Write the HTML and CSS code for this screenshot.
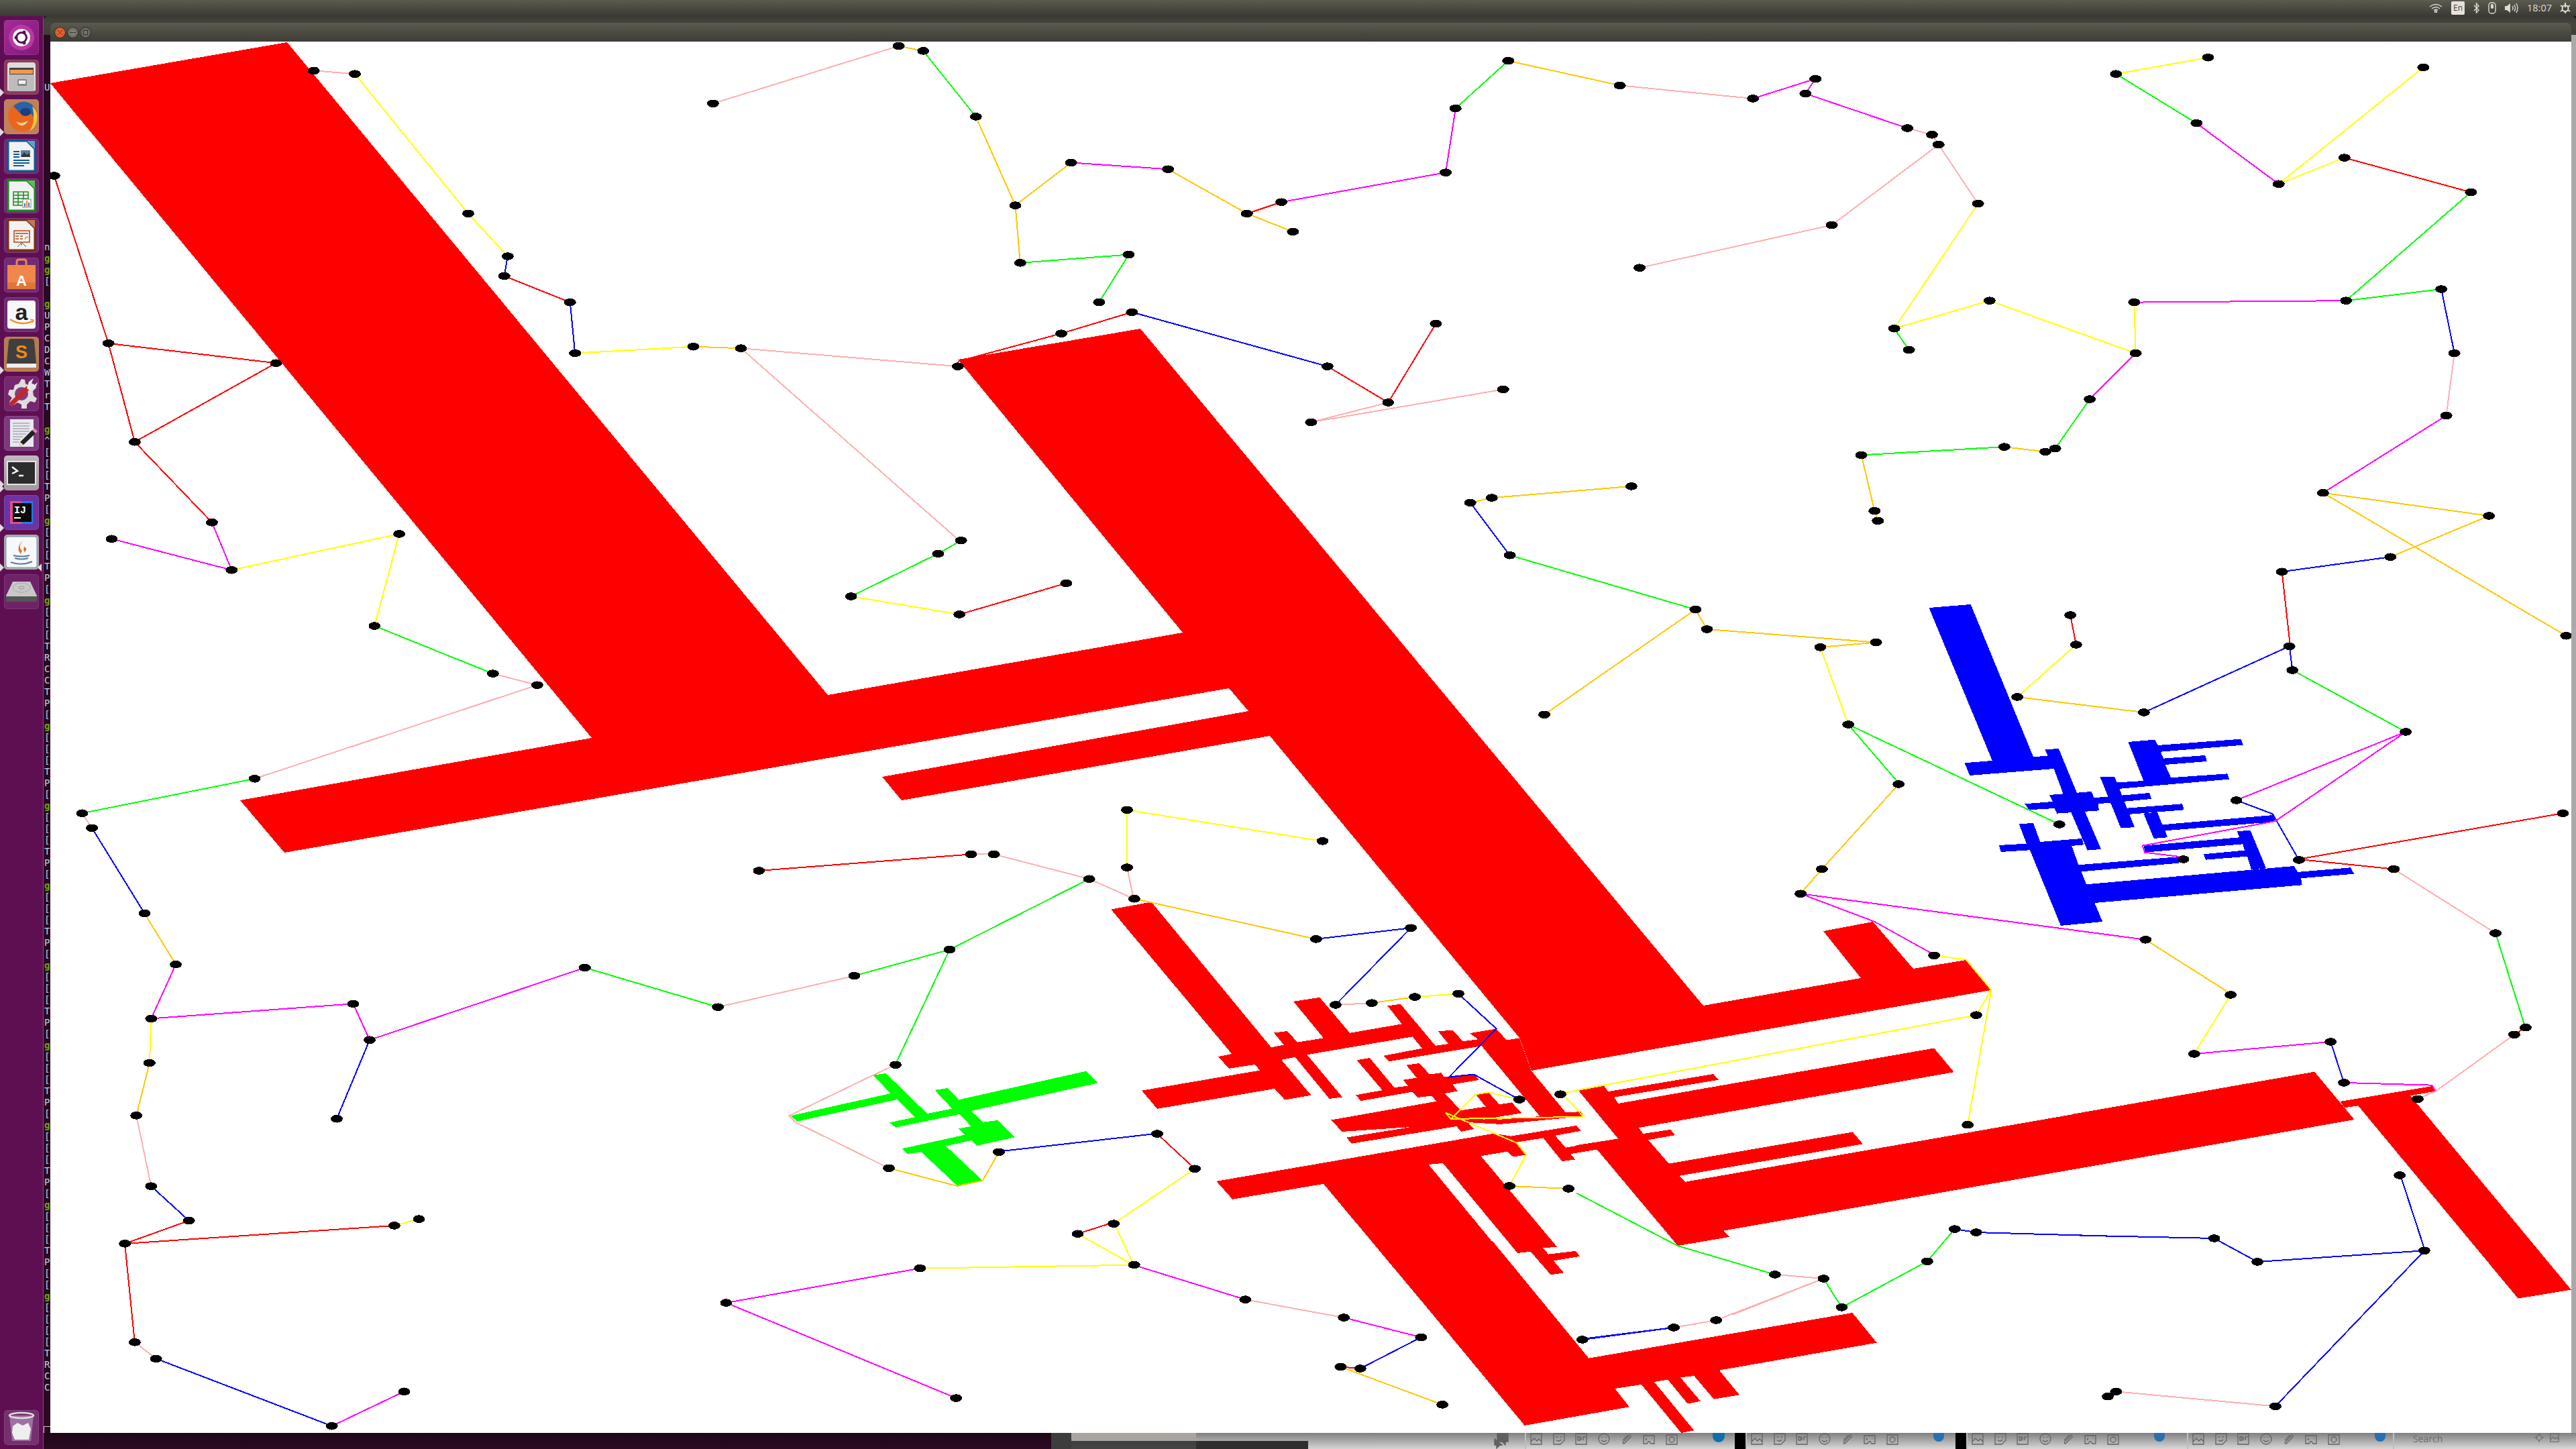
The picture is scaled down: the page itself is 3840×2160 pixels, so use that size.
FILE: index.html
```html
<!DOCTYPE html>
<html lang="en">
<head>
<meta charset="utf-8">
<title>Desktop</title>
<link rel="stylesheet" href="styles.css">
</head>
<body>
<header class="panel">
  <svg class="ind wifi" viewBox="0 0 20 14"><path d="M1 5Q10-2 19 5M4 8Q10 3 16 8M7 10.500Q10 8 13 10.500"/><circle cx="10" cy="12.500" r="1.500"/></svg>
  <span class="lang">En</span>
  <svg class="ind bt" viewBox="0 0 9 18"><path d="M1 5L8 12L4.500 16V2L8 6L1 13"/></svg>
  <svg class="ind mouse" viewBox="0 0 12 18"><rect x="1" y="1" width="10" height="16" rx="4"/><rect class="solid" x="4" y="3" width="4" height="7" rx="2"/></svg>
  <svg class="ind vol" viewBox="0 0 20 16"><path class="solid" d="M0 5H3L8 1V15L3 11H0Z"/><path d="M11 5Q13 8 11 11M14 3Q17 8 14 13M17 1Q21 8 17 15"/></svg>
  <time class="clock">18:07</time>
  <svg class="ind gear" viewBox="0 0 16 16"><circle cx="8" cy="8.500" r="4.500"/><path d="M8 0V7M8 13V16M1 4L4 6M12 11L15 13M15 4L12 6M4 11L1 13"/></svg>
</header>
<div class="main">
  <nav class="launcher">
    <div class="tile t-ubuntu"><svg viewBox="0 0 52 52"><circle cx="26" cy="26" r="19" fill="#b63aa4"/><circle cx="26" cy="26" r="13" fill="#fff"/><circle cx="26" cy="26" r="7.500" fill="none" stroke="#5a1050" stroke-width="3"/><circle cx="18" cy="26" r="2.500" fill="#5a1050"/><circle cx="30" cy="18" r="2.500" fill="#5a1050"/><circle cx="30" cy="34" r="2.500" fill="#5a1050"/></svg></div>
    <div class="tile t-files"><svg viewBox="0 0 52 52"><path d="M5 8Q5 4 9 4H43Q47 4 47 8V46H5Z" fill="#dcdcdc"/><path d="M8 12H44V22H8Z" fill="#4a4038"/><path d="M9 15H43V21H9Z" fill="#ee9a50"/><path d="M7 22H45V47H7Z" fill="#bcbcbc"/><rect x="20" y="29" width="14" height="10" rx="2" fill="#858585"/><rect x="22" y="31" width="10" height="5" fill="#f4f4f4"/></svg></div>
    <div class="tile t-fox"><svg viewBox="0 0 52 52"><circle cx="28" cy="26" r="22" fill="#e8671c"/><path d="M14 10Q28-2 42 8Q50 18 44 26Q38 18 30 20Q22 22 20 16Q16 14 14 10Z" fill="#2a62a8"/><ellipse cx="32" cy="19" rx="8" ry="6" fill="#1a3f80"/><path d="M42 10Q52 20 49 32Q46 44 38 47Q48 34 42 10Z" fill="#f5c842"/><path d="M18 33Q26 38 36 32Q30 42 22 38Z" fill="#f8d8a0"/></svg></div>
    <div class="tile t-doc"><svg viewBox="0 0 52 52"><path d="M6 3H34L46 15V48H6Z" fill="#f2f2f2" stroke="#0f5a90" stroke-width="3"/><path d="M34 3L46 15V3Z" fill="#5aa5d0"/><path d="M14 19H23M14 23H23M14 27H23" stroke="#0f5a90" stroke-width="2"/><path d="M14 32H38M14 36H38M14 40H30" stroke="#0f5a90" stroke-width="2"/><rect x="25" y="17" width="14" height="10" fill="#5a7fa0"/><path d="M25 27L30 20L34 24L37 21L39 27Z" fill="#333"/></svg></div>
    <div class="tile t-doc"><svg viewBox="0 0 52 52"><path d="M6 3H34L46 15V48H6Z" fill="#f2f2f2" stroke="#1a8a1a" stroke-width="3"/><path d="M34 3L46 15V3Z" fill="#5ac05a"/><path d="M14 20H36V40H14ZM14 25H36M14 30H36M14 35H36M21 20V40M29 20V40" fill="none" stroke="#1a8a1a" stroke-width="1.500"/><rect x="28" y="31" width="12" height="12" fill="#fff" stroke="#888"/><rect x="30" y="37" width="2" height="5" fill="#3a7abf"/><rect x="33" y="33" width="2" height="9" fill="#e8862a"/><rect x="36" y="36" width="2" height="6" fill="#3a7abf"/></svg></div>
    <div class="tile t-doc"><svg viewBox="0 0 52 52"><path d="M6 3H34L46 15V48H6Z" fill="#f2f2f2" stroke="#7a2d0a" stroke-width="3"/><path d="M34 3L46 15V3Z" fill="#c8784a"/><rect x="15" y="19" width="23" height="17" fill="#f8f0e8" stroke="#a8481a" stroke-width="1.500"/><path d="M17 23H36M17 27H22M17 31H22M24 27H28M24 31H28" stroke="#a8481a" stroke-width="1.500"/><path d="M31 32L33 28L36 29" stroke="#3a9a3a" fill="none"/><path d="M26 37L20 43M27 37L33 43M26 37V41" stroke="#555"/></svg></div>
    <div class="tile t-store"><svg viewBox="0 0 52 52"><path d="M19 13V6Q19 3 22 3H30Q33 3 33 6V13" fill="none" stroke="#e9855a" stroke-width="3"/><path d="M5 11H47V47H5Z" fill="#f0864a"/><path d="M5 37H47V47H5Z" fill="#e07636"/><text class="store-a" x="26" y="42" text-anchor="middle">A</text></svg></div>
    <div class="tile t-amazon"><svg viewBox="0 0 52 52"><rect x="5" y="5" width="42" height="42" rx="4" fill="#f8f8f8"/><text class="amazon-a" x="26" y="34" text-anchor="middle">a</text><path d="M9 33Q26 44 44 35" fill="none" stroke="#f09020" stroke-width="2.500"/><path d="M39 33L44 34L42 38" fill="none" stroke="#f09020" stroke-width="1.500"/></svg></div>
    <div class="tile t-sublime"><svg viewBox="0 0 52 52"><path d="M7 6Q8 3 11 3H41Q44 3 45 6L48 40H4Z" fill="#3f3f3f"/><path d="M4 40H48V46H4Z" fill="#eee"/><text class="sublime-s" x="26" y="32" text-anchor="middle">S</text></svg></div>
    <div class="tile t-tools"><svg viewBox="0 0 52 52"><path d="M26 4L31 5L32 11L38 14L44 11L48 17L43 22L44 29L49 33L46 39L39 37L34 42V48H26V42L20 39L14 43L8 38L12 32L6 27L8 20L14 20L16 13L22 11Z" fill="#ddd"/><circle cx="26" cy="26" r="10" fill="#8a3a80"/><path d="M9 43L36 17" stroke="#c0282a" stroke-width="7"/><path d="M34 18L37 8L44 3L41 10L45 13L50 9L47 17L38 21Z" fill="#e8e8e8"/></svg></div>
    <div class="tile t-gedit"><svg viewBox="0 0 52 52"><rect x="9" y="5" width="35" height="41" fill="#e8e8f0"/><path d="M13 11H38M13 15H38M13 19H38M13 23H38M13 27H33M13 31H28M13 35H24M13 39H22" stroke="#8a8a90"/><path d="M24 39L42 21L47 26L29 43L23 45Z" fill="#222"/><path d="M42 21L45 18L50 23L47 26Z" fill="#e088b0"/><path d="M24 39L29 43L23 45Z" fill="#f2e8a0"/></svg></div>
    <div class="tile t-term"><svg viewBox="0 0 52 52"><rect x="4" y="8" width="44" height="36" fill="#e4e4e4"/><rect x="6" y="10" width="40" height="32" fill="#2c2c2c"/><path d="M12 17L20 23L12 27" fill="none" stroke="#fff" stroke-width="2.500"/><path d="M22 30H29" stroke="#fff" stroke-width="2.500"/></svg></div>
    <div class="tile t-idea"><svg viewBox="0 0 52 52"><rect x="9" y="9" width="34" height="34" fill="#e84a8a"/><path d="M26 9H43V43H26Z" fill="#1a80e8"/><rect x="13" y="12" width="28" height="28" fill="#0a0a0a"/><text class="idea" x="15" y="27">IJ</text><path d="M15 34H25" stroke="#fff" stroke-width="2"/></svg></div>
    <div class="tile t-java"><svg viewBox="0 0 52 52"><rect x="3" y="3" width="46" height="46" rx="3" fill="#f6f8fa" stroke="#7a9ab0"/><path d="M28 9Q20 18 27 24Q24 28 26 30Q20 24 22 18Q24 12 28 9ZM30 18Q28 24 31 26Q36 20 30 18Z" fill="#e07020"/><path d="M14 31Q26 34 38 31M16 35Q26 38 36 35M10 41Q26 47 42 40" fill="none" stroke="#5a7f9a" stroke-width="2"/></svg></div>
    <div class="tile t-drive"><svg viewBox="0 0 52 52"><path d="M13 11H39L49 32V41H3V32Z" fill="#c8c8c8"/><path d="M3 33H49V41H3Z" fill="#555"/><ellipse cx="26" cy="20" rx="13" ry="7" fill="none" stroke="#aaa"/><ellipse cx="26" cy="20" rx="4" ry="2" fill="none" stroke="#999"/></svg></div>
    <div class="tile t-trash"><svg viewBox="0 0 52 52"><path d="M8 8H44L40 46H12Z" fill="#a070a0"/><ellipse cx="26" cy="8" rx="18" ry="4" fill="none" stroke="#ddd" stroke-width="2.500"/><path d="M13 24L20 19L28 23L36 19L40 28L37 44H16L12 34Z" fill="#eee"/></svg></div>
    <i class="pip" style="top:108px"></i>
    <i class="pip" style="top:167px"></i>
    <i class="pip" style="top:522px"></i>
    <i class="pip" style="top:692px"></i>
    <i class="pip" style="top:698px"></i>
    <i class="pip" style="top:757px"></i>
    <i class="pip" style="top:816px"></i>
    <i class="pip pip-r" style="top:816px"></i>
  </nav>
  <div class="desk">
    <div class="behind-title"></div>
    <pre class="term">U













n
<b>g</b>
<b>g</b>
[

<b>g</b>
U
P
C
D
C
W
T
r
T

<b>g</b>
^
[
[
[
T
P
[
<b>g</b>
[
[
[
T
P
[
<b>g</b>
[
[
[
T
R
C
C
T
P
[
<b>g</b>
[
[
[
T
P
[
<b>g</b>
[
[
[
T
P
[
<b>g</b>
[
[
[
T
P
[
<b>g</b>
[
[
[
T
P
[
<b>g</b>
[
[
[
T
P
[
<b>g</b>
[
[
[
T
P
[
<b>g</b>
[
[
[
T
P
[
[
<b>g</b>
[
[
[
[
T
R
C
C</pre>
    <span class="cursor"></span>
    <div class="edge"></div>
    <div class="strip">
      <div class="strip-a"></div>
      <div class="strip-b"></div>
      <div class="strip-c"><svg class="si chat" viewBox="0 0 24 24"><use href="#i-chat"/></svg></div>
      <div class="compose"><svg class="si"><use href="#i-a"/></svg><svg class="si"><use href="#i-b"/></svg><svg class="si"><use href="#i-c"/></svg><svg class="si"><use href="#i-d"/></svg><svg class="si"><use href="#i-e"/></svg><svg class="si"><use href="#i-f"/></svg><svg class="si"><use href="#i-g"/></svg><span class="moon first"></span><span class="blackbar"></span></div>
      <div class="compose"><svg class="si"><use href="#i-a"/></svg><svg class="si"><use href="#i-b"/></svg><svg class="si"><use href="#i-c"/></svg><svg class="si"><use href="#i-d"/></svg><svg class="si"><use href="#i-e"/></svg><svg class="si"><use href="#i-f"/></svg><svg class="si"><use href="#i-g"/></svg><span class="moon"></span><span class="blackbar"></span></div>
      <div class="compose"><svg class="si"><use href="#i-a"/></svg><svg class="si"><use href="#i-b"/></svg><svg class="si"><use href="#i-c"/></svg><svg class="si"><use href="#i-d"/></svg><svg class="si"><use href="#i-e"/></svg><svg class="si"><use href="#i-f"/></svg><svg class="si"><use href="#i-g"/></svg><span class="moon"></span></div>
      <div class="compose last"><svg class="si"><use href="#i-a"/></svg><svg class="si"><use href="#i-b"/></svg><svg class="si"><use href="#i-c"/></svg><svg class="si"><use href="#i-d"/></svg><svg class="si"><use href="#i-e"/></svg><svg class="si"><use href="#i-f"/></svg><svg class="si"><use href="#i-g"/></svg><span class="moon"></span></div>
      <div class="searchbox"><span class="search">Search</span><span class="spacer"></span><svg class="si small"><use href="#i-h"/></svg><svg class="si small"><use href="#i-a"/></svg></div>
    </div>
    <svg class="defs" width="0" height="0">
      <symbol id="i-a" viewBox="0 0 18 18"><path d="M1 1H17V17H1ZM1 13L6 8L10 12L13 9L17 13"/></symbol>
      <symbol id="i-b" viewBox="0 0 18 18"><path d="M1 1H17V11L11 17H1ZM5 6H7M11 6H13M5 11Q9 14 12 10"/></symbol>
      <symbol id="i-c" viewBox="0 0 18 18"><path d="M1 1H17V17H1ZM4 6H7V11H4ZM9 6V11M12 6H15M12 6V11"/></symbol>
      <symbol id="i-d" viewBox="0 0 18 18"><circle cx="9" cy="9" r="8"/><path d="M5 11Q9 15 13 11M6 6V7M12 6V7"/></symbol>
      <symbol id="i-e" viewBox="0 0 18 18"><path d="M15 2L4 13Q2 16 5 16L16 5M11 3L3 11"/></symbol>
      <symbol id="i-f" viewBox="0 0 18 18"><path d="M1 4H17V16H12L10 13H8L6 16H1ZM5 8V11M4 9H6M13 8V9"/></symbol>
      <symbol id="i-g" viewBox="0 0 18 18"><path d="M1 3H17V17H1Z"/><circle cx="9" cy="10" r="4"/></symbol>
      <symbol id="i-h" viewBox="0 0 18 18"><circle cx="9" cy="9" r="5"/><path d="M9 0V4M9 14V18M0 9H4M14 9H18"/></symbol>
      <symbol id="i-chat" viewBox="0 0 24 24"><path d="M6 1H22V13H18V18L13 13H6Z"/><path d="M2 8V18H5V23L10 18H14"/></symbol>
    </svg>
    <section class="window">
      <div class="titlebar">
        <span class="wbtn close"></span>
        <span class="wbtn minim"></span>
        <span class="wbtn maxim"></span>
      </div>
      <svg class="canvas" viewBox="75 62 3758 2074" width="3758" height="2074">
        <defs>
          <ellipse id="nt" rx="3.670" ry="2.370"/>
          <ellipse id="n4" rx="17.600" ry="17.400"/>
          <ellipse id="n5" rx="17.600" ry="14.700"/>
          <ellipse id="n6" rx="27" ry="17.400"/>
          <ellipse id="n7" rx="17.600" ry="16.200"/>
          <ellipse id="n10" rx="23.500" ry="17.400"/>
          <ellipse id="n12" rx="19" ry="17.400"/>
        </defs>

        <!-- solid bodies -->
        <polygon class="fr" points="75,124 428,63 1234,1036 1763,943 1428,536 1700,490 2539,1499 2774,1458 2718,1388 2792,1374 2852,1444 2931,1431 2968,1476 2350,1584 2283,1596 2265,1547 1893,1097 1344,1193 1315,1158 1861,1060 1832,1026 424,1271 358,1193 882,1100"/>
        <g transform="translate(1650 1320) scale(.5102 .3954)">
          <polygon class="fr" points="12,90 130,62 480,610 517,601 488,555 527,549 557,591 633,575 545,437 622,422 710,556 862,522 820,454 858,447 960,604 998,597 968,550 1010,545 1040,587 1085,580 1060,557 1138,540 1168,583 1205,575 1240,698 1095,605 825,663 808,642 921,614 893,570 585,638 688,798 650,804 550,647 510,657 597,791 520,808 490,766 147,842 102,773 447,697 433,675 357,690 325,645 365,635"/>
          <polygon class="fr" points="1095,605 1240,698 1340,855 1385,853 1393,870 1150,900 1120,885 1265,870"/>
          <polygon class="fr" points="730,658 768,650 840,762 880,755 865,733 905,725 875,677 913,670 943,712 977,706 985,722 1075,712 1087,733 1010,750 1025,775 950,793 908,799 893,778 742,812 727,790 805,772"/>
          <polygon class="fr" points="655,884 962,814 950,793 985,782 1035,848 1183,818 1213,858 1010,900 687,928"/>
          <polygon class="fr" points="700,950 1010,885 1140,880 1150,900 1055,893 1073,918 1035,928 1022,908 715,973"/>
          <polygon class="fr" points="1078,788 1115,780 1147,826 1107,834"/>
          <polygon class="fr" points="320,1115 1130,935 1180,945 1372,905 1385,925 1310,943 1340,988 1495,955 1433,995 1355,1012 1368,1033 1330,1040 1275,952 1197,968 1225,1015 1187,1023 1170,1003 1093,1020 1315,1362 1275,1367 1290,1390 1370,1378 1382,1398 1305,1415 1335,1460 1297,1468 1238,1380 1200,1386 982,1047 940,1052 1270,1568 920,1568 633,1125 367,1183"/>
        </g>
        <g transform="translate(2350 1400) scale(.5102 .3571)">
          <polygon class="fr" points="6,632 80,612 93,636 400,563 416,587 110,660 122,686 1045,455 1103,555 182,787 195,812 275,795 288,818 210,838 270,937 807,805 837,855 300,988 318,1013 1568,702 1568,932 430,1217 447,1243 296,1280 60,878 0,890 0,860 122,833"/>
        </g>
        <g transform="translate(2200 1850) scale(.3827 .3333)">
          <polygon class="fr" points="-405,0 65,0 440,524 1467,321 1562,455 948,578 1027,688 927,707 850,603 797,610 875,716 825,728 748,620 695,630 850,847 800,858 645,642 542,660 598,742 190,825"/>
        </g>
        <g transform="translate(3100 1450) scale(.4719 .3333)">
          <polygon class="fr" points="-20,632 742,443 868,657 -20,880"/>
          <polygon class="fr" points="823,576 1115,507 1125,530 1045,550 1553,1418 1385,1457 880,595 837,604"/>
        </g>
        <g transform="translate(2800 880) scale(.5102 .3333)">
          <polygon class="fb" points="148,78 270,63 453,745 495,740 487,712 527,708 580,905 540,910 513,798 267,828 252,772 333,762"/>
          <polygon class="fb" points="540,910 580,905 651,1158 611,1163"/>
          <polygon class="fb" points="500,915 623,900 630,928 792,906 798,933 642,955 645,985 522,998 515,975 440,982 428,955 510,945"/>
          <polygon class="fb" points="648,835 690,833 749,1060 708,1062"/>
          <polygon class="fb" points="730,678 808,668 817,693 1060,665 1066,692 825,722 833,752 955,738 960,765 838,780 855,838 1020,820 1025,845 700,888 693,860 775,852"/>
          <polygon class="fb" points="720,975 888,955 893,982 730,1002"/>
          <polygon class="fb" points="775,998 815,992 830,1048 1155,1005 1160,1035 838,1075 845,1105 805,1110"/>
          <polygon class="fb" points="353,1140 433,1133 411,1045 453,1041 473,1125 595,1110 600,1138 565,1143 585,1228 875,1192 878,1220 593,1258 608,1315 1090,1250 1215,1233 1225,1260 1380,1240 1390,1268 1235,1288 1238,1318 632,1398 655,1482 533,1500 443,1162 358,1170"/>
          <polygon class="fb" points="775,1142 1055,1105 1048,1078 1087,1073 1133,1243 1090,1250 1078,1190 957,1205 950,1180 1070,1163 1065,1135 780,1172"/>
        </g>
        <g transform="translate(1150 1560) scale(.3333)">
          <polygon class="fg" points="455,128 512,120 697,300 808,278 730,195 787,186 838,238 1408,110 1462,163 893,288 947,338 1012,330 1088,406 920,443 895,420 780,445 945,600 830,622 670,472 608,480 583,457 865,395 837,367 893,357 843,303 555,362 528,340 642,316 563,237 115,335 85,310 532,210"/>
        </g>

        <!-- links -->
        <g transform="scale(2.449)">
          <path class="e r" d="M33 107L66 209L82 269L168 221L66 209M82 269L129 318M583 220L646 203L689 190M307 168L347 184M462 530L591 520M115 743L76 757L240 746M76 757L82 817M808 223L845 245L874 197M1389 348L1394 393M1427 96L1504 117M1245 275L1251 273M656 751L678 744M816 832L828 833M584 374L649 355M759 130L780 123M1399 523L1560 495M1399 523L1457 529"/>
          <path class="e b" d="M309 156L307 168M347 184L350 215M689 190L808 223M919 338L895 306M1389 348L1455 339M1486 176L1494 215M56 504L88 556M225 633L205 681M92 722L115 743M95 827L202 868M607 701L704 690M865 814L828 833M1476 761L1385 856M1461 715L1476 761M963 815L1019 808"/>
          <path class="e g" d="M562 31L594 71M621 160L687 155L669 184M886 66L918 37M1288 45L1337 75M1428 183L1504 117M1428 183L1486 176M1220 272L1133 277M1251 273L1272 243M919 338L1032 371M1125 441L1156 477M1125 441L1254 502M228 381L300 410M50 495L155 474M356 589L437 613M520 594L578 578L663 535M578 578L545 648M518 363L571 337L585 329M1153 200L1162 213M1519 568L1537 625"/>
          <path class="e y" d="M216 45L285 130L309 156M350 215L422 211M141 347L243 325L228 381M518 363L584 374M1153 200L1204 124M1153 200L1211 183L1300 215L1299 184M1387 112L1475 41M1288 45L1344 35M1387 112L1427 96M1108 394L1125 441M686 493L805 512M686 493L686 528M92 620L91 647M240 746L255 742M560 772L690 770M656 751L690 770M678 744L690 770"/>
          <path class="e o" d="M547 28L562 31M594 71L618 125L621 160M618 125L652 99M711 103L759 130L787 141M918 37L986 52M422 211L451 212M1414 300L1515 314L1455 339M1414 300L1562 387M1133 277L1141 311L1143 317M1032 371L940 435M1032 371L1039 383L1142 391L1108 394M1156 477L1109 529L1096 544M88 556L107 587M91 647L83 679M895 306L908 303L993 296M1245 275L1220 272M816 832L878 855M1306 572L1358 605"/>
          <path class="e p" d="M191 43L216 45M434 63L547 28M451 212L583 223M451 212L585 330M986 52L1067 60M1180 88L1115 137L998 163M1180 88L1204 124M845 245L798 257L915 237M300 410L327 417L155 474M50 495L56 504M437 613L520 594M663 535L605 520L591 520M663 535L690 547L686 528M83 679L92 722M82 817L95 827M1489 253L1494 215M1288 847L1385 856M758 791L818 802M1457 529L1519 568M1161 78L1176 82L1180 88"/>
          <path class="e m" d="M652 99L711 103M780 123L880 105L886 66M1067 60L1105 48L1099 57L1161 78M1299 184L1428 183M1337 75L1387 112M1489 253L1414 300M1272 243L1300 215M129 318L141 347L68 328M107 587L92 620L215 611L225 633L356 589M442 793L560 772M442 793L582 851M690 770L758 791M818 802L865 814M202 868L246 847M1096 544L1306 572M1096 544L1141 561L1177 581"/>
        </g>
        <g transform="translate(1650 1320) scale(.5102 .3954)">
          <path class="e o" d="M80 50L611 202M774 443L900 420M1176 1133L1349 1143"/>
          <path class="e b" d="M611 202L888 160L668 450M1027 408L1138 540L1000 722L1072 712L1205 807"/>
          <path class="e p" d="M668 450L774 443"/>
          <path class="e y" d="M900 420L1027 408M1205 807L1115 780L1078 787L1005 880L990 857L1197 970L1225 1015L1176 1133M1005 880L1393 872L1335 790M1325 787L1380 770L1568 725M257 1068L20 1275"/>
          <path class="e r" d="M147 936L257 1068"/>
        </g>
        <g transform="translate(2350 1400) scale(.5102 .3571)">
          <path class="e y" d="M1045 68L1138 85L1212 212L1168 317L5 630M1212 212L1143 775"/>
          <path class="e g" d="M0 1060L296 1280L580 1400M722 1417L775 1537L1025 1345L1105 1210"/>
          <path class="e p" d="M580 1400L722 1417L455 1568"/>
          <path class="e b" d="M1105 1210L1168 1224L1568 1240"/>
        </g>
        <g transform="translate(3100 1450) scale(.4719 .3333)">
          <path class="e y" d="M477 99L362 363"/>
          <path class="e m" d="M362 363L793 309M835 492L1113 503L1125 530"/>
          <path class="e b" d="M793 309L835 492M0 1175L425 1188L562 1293L1089 1243"/>
          <path class="e p" d="M1068 565L1125 530L1373 277"/>
          <path class="e r" d="M1373 277L1409 245"/>
        </g>
        <g transform="translate(2800 880) scale(.5102 .3333)">
          <path class="e r" d="M561 111L578 243"/>
          <path class="e y" d="M578 243L406 477"/>
          <path class="e o" d="M406 477L776 546"/>
          <path class="e b" d="M776 546L1201 250L1210 357M1046 939L1152 1000L1229 1206"/>
          <path class="e g" d="M1210 357L1541 633"/>
          <path class="e m" d="M1541 633L1046 939M1541 633L1160 1032L772 1142L778 1172L875 1190L891 1203"/>
        </g>
        <g transform="translate(1150 1560) scale(.3333)">
          <path class="e p" d="M555 82L455 128L78 310L110 340L525 544"/>
          <path class="e o" d="M525 544L830 624L945 600L1017 472"/>
        </g>
        <g transform="translate(2200 1850) scale(.3827 .3333)">
          <path class="e b" d="M415 441L771 387"/>
          <path class="e p" d="M771 387L936 354L1354 168"/>
        </g>

        <!-- nodes -->
        <g transform="scale(2.449)">
          <use href="#nt" x="191" y="43"/><use href="#nt" x="216" y="45"/><use href="#nt" x="285" y="130"/><use href="#nt" x="309" y="156"/><use href="#nt" x="307" y="168"/><use href="#nt" x="347" y="184"/><use href="#nt" x="350" y="215"/><use href="#nt" x="422" y="211"/><use href="#nt" x="451" y="212"/><use href="#nt" x="583" y="223"/><use href="#nt" x="585" y="329"/><use href="#nt" x="571" y="337"/><use href="#nt" x="518" y="363"/><use href="#nt" x="584" y="374"/><use href="#nt" x="649" y="355"/><use href="#nt" x="434" y="63"/><use href="#nt" x="547" y="28"/><use href="#nt" x="562" y="31"/><use href="#nt" x="594" y="71"/><use href="#nt" x="618" y="125"/><use href="#nt" x="621" y="160"/><use href="#nt" x="652" y="99"/><use href="#nt" x="711" y="103"/><use href="#nt" x="759" y="130"/><use href="#nt" x="787" y="141"/><use href="#nt" x="780" y="123"/><use href="#nt" x="880" y="105"/><use href="#nt" x="886" y="66"/><use href="#nt" x="918" y="37"/><use href="#nt" x="986" y="52"/><use href="#nt" x="1067" y="60"/><use href="#nt" x="1105" y="48"/><use href="#nt" x="1099" y="57"/><use href="#nt" x="1161" y="78"/><use href="#nt" x="1176" y="82"/><use href="#nt" x="1180" y="88"/><use href="#nt" x="1115" y="137"/><use href="#nt" x="998" y="163"/><use href="#nt" x="1204" y="124"/><use href="#nt" x="1153" y="200"/><use href="#nt" x="1162" y="213"/><use href="#nt" x="1211" y="183"/><use href="#nt" x="1300" y="215"/><use href="#nt" x="1299" y="184"/><use href="#nt" x="1428" y="183"/><use href="#nt" x="1504" y="117"/><use href="#nt" x="1427" y="96"/><use href="#nt" x="1387" y="112"/><use href="#nt" x="1337" y="75"/><use href="#nt" x="1288" y="45"/><use href="#nt" x="1344" y="35"/><use href="#nt" x="1475" y="41"/><use href="#nt" x="1486" y="176"/><use href="#nt" x="1494" y="215"/><use href="#nt" x="1489" y="253"/><use href="#nt" x="1414" y="300"/><use href="#nt" x="1515" y="314"/><use href="#nt" x="1455" y="339"/><use href="#nt" x="1389" y="348"/><use href="#nt" x="1562" y="387"/><use href="#nt" x="1272" y="243"/><use href="#nt" x="1251" y="273"/><use href="#nt" x="1245" y="275"/><use href="#nt" x="1220" y="272"/><use href="#nt" x="1133" y="277"/><use href="#nt" x="1141" y="311"/><use href="#nt" x="1143" y="317"/><use href="#nt" x="1039" y="383"/><use href="#nt" x="1032" y="371"/><use href="#nt" x="940" y="435"/><use href="#nt" x="919" y="338"/><use href="#nt" x="895" y="306"/><use href="#nt" x="908" y="303"/><use href="#nt" x="993" y="296"/><use href="#nt" x="1142" y="391"/><use href="#nt" x="1108" y="394"/><use href="#nt" x="1125" y="441"/><use href="#nt" x="1096" y="544"/><use href="#nt" x="1109" y="529"/><use href="#nt" x="1306" y="572"/><use href="#nt" x="687" y="155"/><use href="#nt" x="669" y="184"/><use href="#nt" x="689" y="190"/><use href="#nt" x="646" y="203"/><use href="#nt" x="808" y="223"/><use href="#nt" x="845" y="245"/><use href="#nt" x="874" y="197"/><use href="#nt" x="798" y="257"/><use href="#nt" x="915" y="237"/><use href="#nt" x="33" y="107"/><use href="#nt" x="66" y="209"/><use href="#nt" x="82" y="269"/><use href="#nt" x="168" y="221"/><use href="#nt" x="129" y="318"/><use href="#nt" x="141" y="347"/><use href="#nt" x="68" y="328"/><use href="#nt" x="243" y="325"/><use href="#nt" x="228" y="381"/><use href="#nt" x="300" y="410"/><use href="#nt" x="327" y="417"/><use href="#nt" x="155" y="474"/><use href="#nt" x="50" y="495"/><use href="#nt" x="56" y="504"/><use href="#nt" x="88" y="556"/><use href="#nt" x="107" y="587"/><use href="#nt" x="92" y="620"/><use href="#nt" x="215" y="611"/><use href="#nt" x="225" y="633"/><use href="#nt" x="205" y="681"/><use href="#nt" x="356" y="589"/><use href="#nt" x="437" y="613"/><use href="#nt" x="520" y="594"/><use href="#nt" x="578" y="578"/><use href="#nt" x="663" y="535"/><use href="#nt" x="605" y="520"/><use href="#nt" x="591" y="520"/><use href="#nt" x="462" y="530"/><use href="#nt" x="686" y="493"/><use href="#nt" x="686" y="528"/><use href="#nt" x="805" y="512"/><use href="#nt" x="91" y="647"/><use href="#nt" x="83" y="679"/><use href="#nt" x="92" y="722"/><use href="#nt" x="115" y="743"/><use href="#nt" x="76" y="757"/><use href="#nt" x="240" y="746"/><use href="#nt" x="255" y="742"/><use href="#nt" x="82" y="817"/><use href="#nt" x="95" y="827"/><use href="#nt" x="202" y="868"/><use href="#nt" x="246" y="847"/><use href="#nt" x="656" y="751"/><use href="#nt" x="560" y="772"/><use href="#nt" x="442" y="793"/><use href="#nt" x="582" y="851"/><use href="#nt" x="758" y="791"/><use href="#nt" x="818" y="802"/><use href="#nt" x="865" y="814"/><use href="#nt" x="828" y="833"/><use href="#nt" x="816" y="832"/><use href="#nt" x="878" y="855"/><use href="#nt" x="1283" y="850"/><use href="#nt" x="1288" y="847"/><use href="#nt" x="1385" y="856"/><use href="#nt" x="1457" y="529"/><use href="#nt" x="1519" y="568"/><use href="#nt" x="1560" y="495"/>
        </g>
        <g transform="translate(1650 1320) scale(.5102 .3954)">
          <use href="#n5" x="80" y="50"/><use href="#n5" x="611" y="202"/><use href="#n5" x="888" y="160"/><use href="#n5" x="668" y="450"/><use href="#n5" x="774" y="443"/><use href="#n5" x="900" y="420"/><use href="#n5" x="1027" y="408"/><use href="#n5" x="1205" y="807"/><use href="#n5" x="1325" y="787"/><use href="#n5" x="1176" y="1133"/><use href="#n5" x="1349" y="1143"/><use href="#n5" x="147" y="936"/><use href="#n5" x="257" y="1068"/><use href="#n5" x="20" y="1275"/><use href="#n5" x="80" y="1430"/>
        </g>
        <g transform="translate(2350 1400) scale(.5102 .3571)">
          <use href="#n7" x="1045" y="68"/><use href="#n7" x="1168" y="317"/><use href="#n7" x="1143" y="775"/><use href="#n7" x="580" y="1400"/><use href="#n7" x="722" y="1417"/><use href="#n7" x="775" y="1537"/><use href="#n7" x="1025" y="1345"/><use href="#n7" x="1105" y="1210"/><use href="#n7" x="1168" y="1224"/>
        </g>
        <g transform="translate(2200 1850) scale(.3827 .3333)">
          <use href="#n10" x="415" y="441"/><use href="#n10" x="771" y="387"/><use href="#n10" x="936" y="354"/>
        </g>
        <g transform="translate(3100 1450) scale(.4719 .3333)">
          <use href="#n12" x="477" y="99"/><use href="#n12" x="362" y="363"/><use href="#n12" x="793" y="309"/><use href="#n12" x="835" y="492"/><use href="#n12" x="1068" y="565"/><use href="#n12" x="1373" y="277"/><use href="#n12" x="1409" y="245"/><use href="#n12" x="1011" y="906"/><use href="#n12" x="1089" y="1243"/><use href="#n12" x="425" y="1188"/><use href="#n12" x="562" y="1293"/>
        </g>
        <g transform="translate(2800 880) scale(.5102 .3333)">
          <use href="#n4" x="561" y="111"/><use href="#n4" x="578" y="243"/><use href="#n4" x="406" y="477"/><use href="#n4" x="776" y="546"/><use href="#n4" x="1201" y="250"/><use href="#n4" x="1210" y="357"/><use href="#n4" x="1541" y="633"/><use href="#n4" x="1046" y="939"/><use href="#n4" x="891" y="1203"/><use href="#n4" x="1229" y="1206"/><use href="#n4" x="529" y="1047"/><use href="#n4" x="59" y="867"/>
        </g>
        <g transform="translate(1150 1560) scale(.3333)">
          <use href="#n6" x="555" y="82"/><use href="#n6" x="525" y="544"/><use href="#n6" x="1017" y="472"/>
        </g>
      </svg>
    </section>
  </div>
</div>
</body>
</html>
```

FILE: styles.css
```css
* { box-sizing: border-box; }
html, body { margin: 0; padding: 0; width: 3840px; height: 2160px; overflow: hidden; background: #2c0a24; }
body { display: flex; flex-direction: column; font-family: "Open Sans", sans-serif; }

.panel {
  height: 24px; flex: none; display: flex; align-items: center; justify-content: flex-end;
  gap: 13px; padding-right: 8px;
  background: linear-gradient(#5c5b50, #3a3933);
}
.ind { fill: none; stroke: #dfdbd2; stroke-width: 1.4; }
.ind .solid, .ind circle.solid { fill: #dfdbd2; stroke: none; }
.wifi { width: 20px; height: 14px; }
.lang { width: 20px; height: 20px; background: #e6e2da; color: #3c3b37; font-size: 12px; line-height: 20px; text-align: center; border-radius: 2px; }
.bt { width: 9px; height: 18px; }
.mouse { width: 12px; height: 18px; }
.vol { width: 20px; height: 16px; }
.clock { width: 36px; color: #dcdcd6; font-size: 14.500px; line-height: 24px; white-space: nowrap; }
.gear { width: 16px; height: 16px; stroke-width: 2; }

.main { display: flex; flex: 1; height: 2136px; }

.launcher {
  position: relative; flex: none; width: 65px; height: 2136px; padding: 6px 7px 6px 6px;
  display: flex; flex-direction: column; gap: 7px;
  background: #5e0f52; border-right: 1px solid #7d4f76;
}
.tile { width: 52px; height: 52px; flex: none; border-radius: 5px; background: rgba(255, 255, 255, .13); box-shadow: inset 0 0 0 1px rgba(255, 255, 255, .1); }
.tile svg { display: block; width: 52px; height: 52px; }
.t-ubuntu { background: linear-gradient(135deg, #a62a96, #84187a); }
.t-files { background: #8b3a5c; }
.t-fox { background: #c08058; }
.t-doc { background: #6e2a70; }
.t-store { background: #722a72; }
.t-amazon { background: #702a72; }
.t-sublime { background: #b67c4c; }
.t-tools { background: #76286e; }
.t-gedit { background: #7e3a7e; }
.t-term { background: linear-gradient(#c0b8bc, #a09a9e); }
.t-idea { background: #6c34a2; }
.t-java { background: #a8a8a8; }
.t-drive { background: #6e2268; }
.t-trash { margin-top: auto; background: #75306e; }
.store-a { font: bold 22px "Liberation Sans", sans-serif; fill: #fff; }
.amazon-a { font: bold 34px "Liberation Sans", sans-serif; fill: #222; }
.sublime-s { font: bold 27px "Liberation Sans", sans-serif; fill: #f08a1c; }
.idea { font: bold 15px "Liberation Mono", monospace; fill: #fff; }
.pip { position: absolute; left: 0; width: 0; height: 0; border: 6px solid transparent; border-left: 6px solid #ddd; border-right: 0; }
.pip-r { left: auto; right: 2px; border-left: 0; border-right: 6px solid #ddd; }

.desk { position: relative; flex: 1; background: #2a0a22; }
.behind-title { height: 28px; background: linear-gradient(#3a3933, #46453d 40%, #3e3d37); border-radius: 6px 6px 0 0; }
.term {
  position: absolute; left: 0; top: 98px; width: 10px; margin: 0; padding-left: 1px; overflow: hidden;
  font: 14px/17px "DejaVu Sans Mono", monospace; color: #c4cfe0;
}
.term b { color: #6ea514; }
.cursor { position: absolute; left: 0; top: 2102px; width: 11px; height: 18px; border: 1px solid #c8c8c8; }
.edge { position: absolute; top: 28px; right: 0; bottom: 24px; width: 7px; background: #a9a9a9; }

.window { position: absolute; left: 10px; top: 10px; width: 3758px; height: 2102px; }
.titlebar {
  height: 28px; display: flex; align-items: center; gap: 4px; padding-left: 7px;
  background: linear-gradient(#5b5a4f, #3d3c36); border-radius: 8px 8px 0 0;
}
.wbtn { width: 15px; height: 15px; border-radius: 50%; background: radial-gradient(#7c7b73, #55544d); box-shadow: 0 0 0 1px #33322e; position: relative; }
.close { background: radial-gradient(#f0703a, #d64a20); }
.minim { background: radial-gradient(#8a8981, #5d5c55); }
.close::after { content: ""; position: absolute; inset: 4px; background: linear-gradient(45deg, transparent 45%, #5a2010 45%, #5a2010 55%, transparent 55%), linear-gradient(-45deg, transparent 45%, #5a2010 45%, #5a2010 55%, transparent 55%); }
.minim::after { content: ""; position: absolute; left: 3px; right: 3px; top: 7px; height: 1px; background: #33322e; }
.maxim::after { content: ""; position: absolute; inset: 4px; border: 1px solid #33322e; }

.canvas { display: block; background: #fff; shape-rendering: crispEdges; }
.canvas use { fill: #000; }
.fr { fill: #f00; }
.fb { fill: #00f; }
.fg { fill: #0f0; }
.e { fill: none; stroke-width: 2; vector-effect: non-scaling-stroke; stroke-linejoin: miter; }
.r { stroke: #f00; }
.b { stroke: #00f; }
.g { stroke: #0f0; }
.y { stroke: #ff0; }
.o { stroke: #ffc800; }
.p { stroke: #ffafaf; }
.m { stroke: #f0f; }

.strip { position: absolute; left: 0; right: 0; bottom: 0; height: 24px; display: flex; background: linear-gradient(#1e0718, #2c0a22); overflow: hidden; }
.strip-a { width: 1502px; flex: none; }
.strip-b { width: 216px; flex: none; background: linear-gradient(#3a3a3a, #444); border-left: 30px solid #3d3d3d; box-shadow: inset 0 12px 0 #a8a49e; }
.strip-c {
  width: 490px; flex: none; padding-left: 443px;
  background: linear-gradient(#2e2e2e, #2e2e2e) 0 12px / 167px 12px no-repeat, linear-gradient(#808080, #d4d4d4);
}
.compose { width: 329px; flex: none; display: flex; gap: 15.700px; padding: 0 0 0 6px; background: linear-gradient(#808080, #d8d8d8); border-left: 2px solid #bdbdbd; position: relative; }
.compose.last { width: 307px; }
.si { width: 18px; height: 18px; flex: none; fill: none; stroke: #626262; stroke-width: 1.300; }
.chat { display: block; width: 24px; height: 24px; fill: #606060; stroke: #606060; }
.moon { position: absolute; left: 278px; top: 0; width: 16px; height: 13px; background: #2a6fb0; border-radius: 0 0 9px 9px; }
.moon.first { width: 18px; height: 14px; background: #106fa6; }
.blackbar { position: absolute; right: 0; top: 0; width: 16px; height: 24px; background: #000; }
.searchbox { flex: 1; display: flex; gap: 9px; background: linear-gradient(#808080, #d8d8d8); border-left: 2px solid #bdbdbd; padding-left: 28px; padding-right: 25px; }
.search { color: #6d6d6d; font-size: 14px; line-height: 18px; }
.spacer { flex: 1; }
.small { width: 14px; height: 14px; }
```
